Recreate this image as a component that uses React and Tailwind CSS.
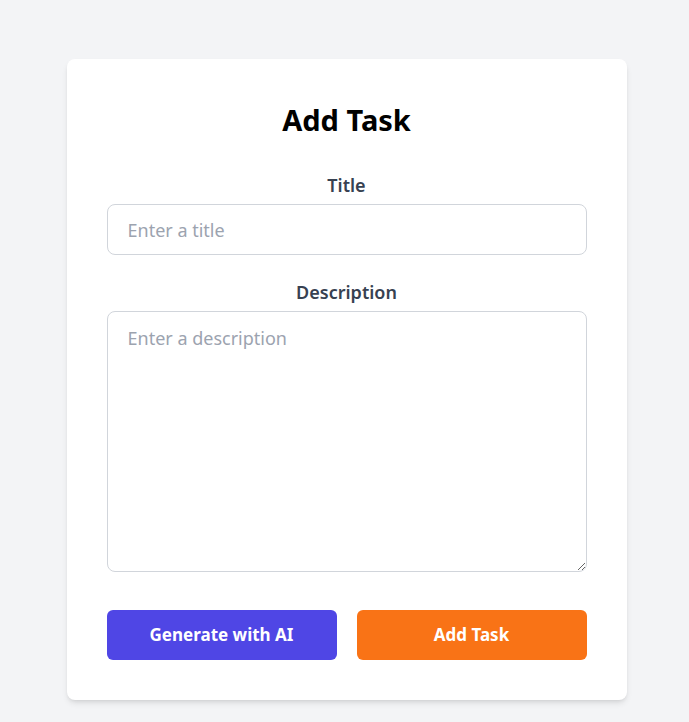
import { useState } from 'react'

export default function App() {
	const [title, setTitle] = useState('')
	const [description, setDescription] = useState('')

	return (
		<div className="min-h-screen bg-[#f3f4f6] pt-[59px] pb-[22px] pl-1 font-['Noto_Sans',sans-serif]">
			<div className="w-[560px] mx-auto bg-white rounded-lg shadow-md p-10">
				<h1 className="text-[29px] leading-9 font-bold text-center text-black mt-[3px] mb-[33px]">Add Task</h1>
				<div className="mb-[23px]">
					<label htmlFor="title" className="block text-center text-lg font-semibold text-[#374151] mb-[5px]">Title</label>
					<input
						id="title"
						type="text"
						value={title}
						onChange={e => setTitle(e.target.value)}
						placeholder="Enter a title"
						className="block w-full h-[51px] border border-[#d1d5db] rounded-lg px-5 text-lg text-[#111827] placeholder:text-[#9ca3af] outline-none"
					/>
				</div>
				<div>
					<label htmlFor="description" className="block text-center text-lg font-semibold text-[#374151] mb-[5px]">Description</label>
					<textarea
						id="description"
						value={description}
						onChange={e => setDescription(e.target.value)}
						placeholder="Enter a description"
						className="block w-full h-[261px] border border-[#d1d5db] rounded-lg px-5 py-3 text-lg text-[#111827] placeholder:text-[#9ca3af] outline-none"
					/>
				</div>
				<div className="flex gap-5 mt-[38px]">
					<button className="flex-1 h-[50px] rounded-md bg-[#4f46e5] text-white text-[17px] font-bold">Generate with AI</button>
					<button className="flex-1 h-[50px] rounded-md bg-[#f97316] text-white text-[17px] font-bold">Add Task</button>
				</div>
			</div>
		</div>
	)
}
